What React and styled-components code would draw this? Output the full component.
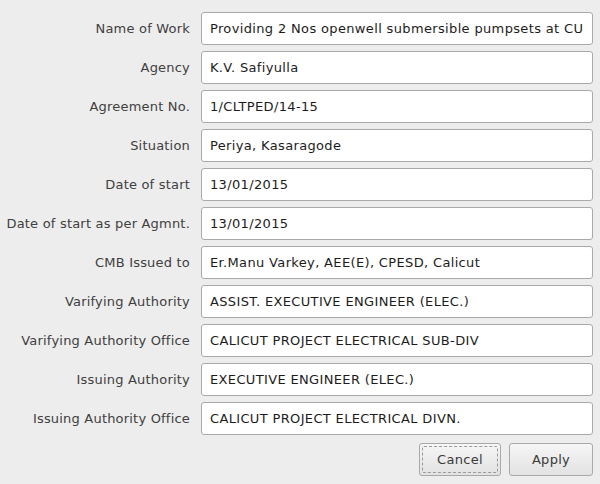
import React from "react";
import styled, { createGlobalStyle } from "styled-components";

const Global = createGlobalStyle`
  html, body { margin: 0; padding: 0; background: #ededed; }
  body { font-family: "DejaVu Sans", sans-serif; }
`;

const Page = styled.div`
  width: 600px;
  height: 484px;
  box-sizing: border-box;
  padding: 12px 7px 0 0;
  background: #ededed;
  display: flex;
  flex-direction: column;
  align-items: flex-end;
`;

const Form = styled.div`
  display: grid;
  grid-template-columns: 190px 392px;
  column-gap: 11px;
  row-gap: 6px;
`;

const Label = styled.div`
  height: 33px;
  display: flex;
  align-items: center;
  justify-content: flex-end;
  font-size: 13px;
  color: #404040;
  white-space: nowrap;
  letter-spacing: 0.2px;
`;

const Field = styled.div`
  height: 33px;
  box-sizing: border-box;
  border: 1px solid #aaaaaa;
  border-radius: 3px;
  background: #ffffff;
  display: flex;
  align-items: center;
  padding: 0 8px;
  font-size: 13px;
  color: #1c1c1c;
  white-space: nowrap;
  overflow: hidden;
  letter-spacing: 0.35px;
`;

const Buttons = styled.div`
  display: flex;
  gap: 8px;
  margin-top: 8px;
`;

const Button = styled.div`
  position: relative;
  width: ${(p) => p.$w}px;
  height: 33px;
  box-sizing: border-box;
  border: 1px solid #a9a9a9;
  border-radius: 3px;
  background: linear-gradient(#f6f6f6, #e2e2e2);
  display: flex;
  align-items: center;
  justify-content: center;
  font-size: 13px;
  color: #3a3a3a;
  letter-spacing: 0.3px;
`;

const Focus = styled.div`
  position: absolute;
  inset: 2px;
  border: 1px dashed #9a9a9a;
  border-radius: 2px;
`;

const rows = [
  ["Name of Work", "Providing 2 Nos openwell submersible pumpsets at CU"],
  ["Agency", "K.V. Safiyulla"],
  ["Agreement No.", "1/CLTPED/14-15"],
  ["Situation", "Periya, Kasaragode"],
  ["Date of start", "13/01/2015"],
  ["Date of start as per Agmnt.", "13/01/2015"],
  ["CMB Issued to", "Er.Manu Varkey, AEE(E), CPESD, Calicut"],
  ["Varifying Authority", "ASSIST. EXECUTIVE ENGINEER (ELEC.)"],
  ["Varifying Authority Office", "CALICUT PROJECT ELECTRICAL SUB-DIV"],
  ["Issuing Authority", "EXECUTIVE ENGINEER (ELEC.)"],
  ["Issuing Authority Office", "CALICUT PROJECT ELECTRICAL DIVN."],
];

export default function App() {
  return (
    <>
      <Global />
      <Page>
        <Form>
          {rows.map(([l, v]) => (
            <React.Fragment key={l}>
              <Label>{l}</Label>
              <Field>{v}</Field>
            </React.Fragment>
          ))}
        </Form>
        <Buttons>
          <Button $w={82}>
            <Focus />
            Cancel
          </Button>
          <Button $w={84}>Apply</Button>
        </Buttons>
      </Page>
    </>
  );
}
